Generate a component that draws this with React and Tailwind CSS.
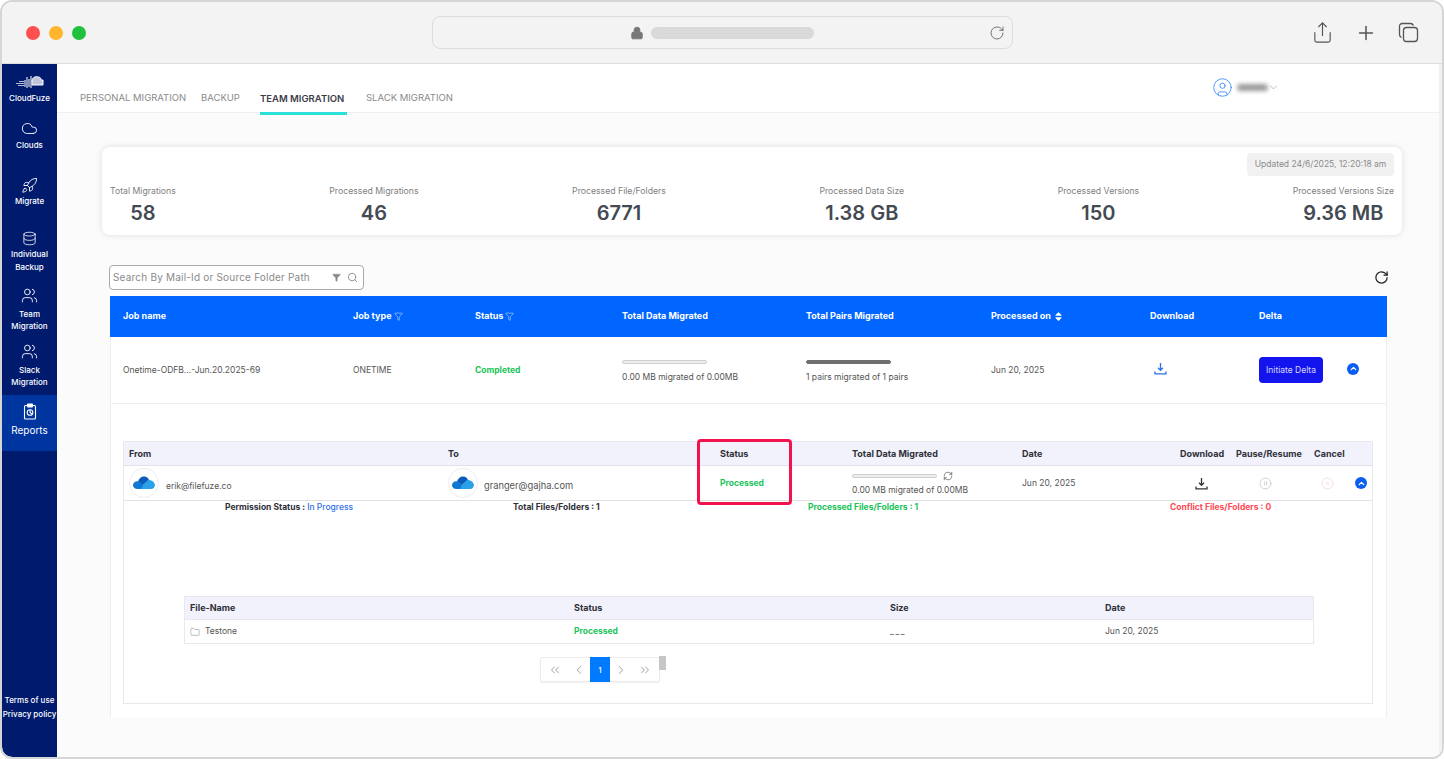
import React from "react"
import { ChevronDown, ChevronLeft, ChevronRight, ChevronUp, ChevronsLeft, ChevronsRight, CirclePause, CircleUser, CircleX, Cloud, Database, Folder, Funnel, Lock, Plus, RefreshCw, Rocket, RotateCw, Search, Share, Users } from "lucide-react"
import { FaSort } from "react-icons/fa"

const stats = [
  ["Total Migrations", "58"],
  ["Processed Migrations", "46"],
  ["Processed File/Folders", "6771"],
  ["Processed Data Size", "1.38 GB"],
  ["Processed Versions", "150"],
  ["Processed Versions Size", "9.36 MB"],
]

function Logo() {
  return (
    <svg width="30" height="18" viewBox="0 0 30 18" fill="none" stroke="white" strokeWidth="1">
      <path d="M1 9.500h8M3 11.500h6M4 7.500h5" strokeOpacity=".7" />
      <path d="M10 6v7M12 3v11M14 5v8M16 2v12" />
      <path d="M17 6c1-3 4-4 6-3 2 0 3 1 3 3h2v5H17z" fill="white" fillOpacity=".75" />
    </svg>
  )
}

function OneDrive() {
  return (
    <div className="w-[30px] h-[30px] rounded-full border border-[#eeeeee] flex items-center justify-center bg-white shrink-0">
      <svg width="22" height="14" viewBox="0 0 22 14">
        <path d="M5 5.500C6 2 9-.2 12 .6c2 .5 3.400 1.700 4 3.400L10 9z" fill="#0a5cb8" />
        <path d="M4.500 13C2 13 0 11.400 0 9.200 0 7 2 5 5 5.300L11 9l-2 4z" fill="#0f78d4" />
        <path d="M8 13l2-4 5-5c3-.4 6 1.600 7 4.500 0 2.500-1.500 4.500-4 4.500z" fill="#2aa0e8" />
      </svg>
    </div>
  )
}

function DownloadIcon({ className }) {
  return (
    <svg className={className} width="13" height="13" viewBox="0 0 13 13" fill="none" stroke="currentColor" strokeWidth="1.300">
      <path d="M6.500 1v7M4 5.800l2.500 2.500L9 5.800" />
      <path d="M1 9.500v2.300h11V9.500" />
    </svg>
  )
}

function ToggleUp() {
  return (
    <span className="w-3 h-3 rounded-full bg-[#0b5ff0] flex items-center justify-center">
      <ChevronUp size={9} strokeWidth={3.5} className="text-white" />
    </span>
  )
}

function SideItem({ icon, lines, className }) {
  return (
    <div className={"flex flex-col items-center text-white text-[8px] font-medium " + className}>
      {icon}
      {lines.map(l => <span key={l}>{l}</span>)}
    </div>
  )
}

function Sidebar() {
  return (
    <aside className="w-[55px] shrink-0 bg-[#001a6e] flex flex-col rounded-bl-[10px]">
      <SideItem className="mt-[10px] leading-[12px]" icon={<Logo />} lines={["CloudFuze"]} />
      <SideItem className="mt-[16px] leading-[12px]" icon={<Cloud size={17} strokeWidth={1.3} className="mb-[2px]" />} lines={["Clouds"]} />
      <SideItem className="mt-[26px] leading-[12px]" icon={<Rocket size={17} strokeWidth={1.3} className="mb-[1px]" />} lines={["Migrate"]} />
      <SideItem className="mt-[24px] leading-[13px]" icon={<Database size={15} strokeWidth={1.3} className="mb-[2px]" />} lines={["Individual", "Backup"]} />
      <SideItem className="mt-[13px] leading-[12px]" icon={<Users size={17} strokeWidth={1.3} className="mb-[4px]" />} lines={["Team", "Migration"]} />
      <SideItem className="mt-[11px] leading-[12px]" icon={<Users size={17} strokeWidth={1.3} className="mb-[4px]" />} lines={["Slack", "Migration"]} />
      <div className="mt-[7px] h-[56px] bg-[#00349f] flex flex-col items-center pt-[8px] text-white text-[10px] leading-[14px]">
        <svg width="14" height="17" viewBox="0 0 14 17" fill="none" stroke="white" strokeWidth="1.100" className="mb-[3px]">
          <rect x="1.500" y="2.500" width="11" height="13.500" rx="1" />
          <rect x="4.500" y="1" width="5" height="3" rx=".5" fill="white" />
          <circle cx="7" cy="9.500" r="2.800" />
          <path d="M7 7v2.500l2 1.500" />
        </svg>
        Reports
      </div>
      <div className="mt-auto mb-[36px] flex flex-col items-center text-white text-[8px] leading-[14px] font-medium">
        <span>Terms of use</span>
        <span>Privacy policy</span>
      </div>
    </aside>
  )
}

function TopNav() {
  return (
    <nav className="h-[49px] shrink-0 bg-white border-b border-[#f0f0f0] flex items-end pl-[23px] pr-[160px] text-[9.5px] text-[#8a8a8a]">
      <span className="mb-[7px] w-[121px]">PERSONAL MIGRATION</span>
      <span className="mb-[7px] w-[59px]">BACKUP</span>
      <span className="w-[106px] h-[27px] -mb-[3px]">
        <span className="block w-[87px] h-full pt-[4px] font-semibold text-[#3d3d4a] border-b-[3px] border-[#2be0d8] whitespace-nowrap">TEAM MIGRATION</span>
      </span>
      <span className="mb-[7px]">SLACK MIGRATION</span>
      <div className="ml-auto self-start mt-[13px] flex items-center text-[#888]">
        <CircleUser size={21} strokeWidth={1} className="text-[#3d8bff]" />
        <span className="ml-[4px] w-[31px] h-[7px] rounded-full bg-[#9a9a9a] blur-[2px]"></span>
        <ChevronDown size={11} strokeWidth={1.2} />
      </div>
    </nav>
  )
}

function StatsCard() {
  return (
    <section className="ml-[45px] mr-[37px] h-[88px] bg-white rounded-lg shadow-[0_0_6px_rgba(0,0,0,0.12)] px-[8px] pt-[6px]">
      <div className="flex justify-end">
        <span className="h-[23px] w-[147px] rounded bg-[#f1f1f1] text-[#8b8b8b] text-[8.5px] flex items-center justify-center">Updated 24/6/2025, 12:20:18 am</span>
      </div>
      <div className="flex justify-between mt-[9px]">
        {stats.map(([label, val]) => (
          <div key={label} className="flex flex-col items-center">
            <span className="text-[8.7px] leading-[12px] text-[#808080] whitespace-nowrap">{label}</span>
            <span className="text-[20px] leading-[33px] font-semibold text-[#444a52]">{val}</span>
          </div>
        ))}
      </div>
    </section>
  )
}

function Progress({ text, dark, extra, gap }) {
  return (
    <div className="flex flex-col">
      <div className="flex items-center">
        <div className={"w-[85px] h-[4px] rounded-full border " + (dark ? "bg-[#6f6f6f] border-[#6f6f6f]" : "bg-[#eeeeee] border-[#cfcfcf]")}></div>
        {extra}
      </div>
      <span className={"text-[8.5px] leading-[12px] text-[#555] whitespace-nowrap " + gap}>{text}</span>
    </div>
  )
}

function JobTable() {
  return (
    <div className="ml-[53px] mr-[52px] flex-1 bg-white border-x border-[#eeeeee] flex flex-col">
      <div className="h-[41px] -mx-[1px] pb-[1px] bg-[#0066ff] grid grid-cols-[230px_122px_147px_184px_185px_159px_109px_1fr] pl-[13px] items-center text-white text-[9px] font-bold">
        <span>Job name</span>
        <span className="flex items-center gap-[2px]">Job type <Funnel size={9} strokeWidth={1.2} /></span>
        <span className="flex items-center gap-[2px]">Status <Funnel size={9} strokeWidth={1.2} /></span>
        <span>Total Data Migrated</span>
        <span>Total Pairs Migrated</span>
        <span className="flex items-center gap-[2px]">Processed on <FaSort size={11} /></span>
        <span>Download</span>
        <span>Delta</span>
      </div>
      <div className="h-[67px] -ml-[1px] border-b border-[#eeeeee] grid grid-cols-[230px_122px_147px_184px_185px_159px_109px_88px_1fr] pl-[13px] items-center text-[8.5px] text-[#555]">
        <span>Onetime-ODFB...-Jun.20.2025-69</span>
        <span>ONETIME</span>
        <span className="font-bold text-[#19c45a]">Completed</span>
        <div className="mt-[2px]"><Progress gap="mt-[7px]" text="0.00 MB migrated of 0.00MB" /></div>
        <div className="mt-[2px]"><Progress dark gap="mt-[7px]" text="1 pairs migrated of 1 pairs" /></div>
        <span>Jun 20, 2025</span>
        <DownloadIcon className="text-[#2f6fe8] ml-[4px] -mt-[3px]" />
        <span className="w-[64px] h-[26px] rounded bg-[#1414ee] text-[#d5d8ff] flex items-center justify-center">Initiate Delta</span>
        <span className="-mt-[3px]"><ToggleUp /></span>
      </div>
      <PairPanel />
    </div>
  )
}

function PairPanel() {
  return (
    <div className="relative ml-[12px] mr-[13px] mt-[37px] h-[263px] border border-[#e8e8ee] flex flex-col">
      <div className="h-[24px] shrink-0 bg-[#f1f2fc] border-b border-[#e1e1ea] grid grid-cols-[319px_272px_132px_170px_158px_56px_78px_1fr] pl-[5px] items-center text-[9px] font-bold text-[#2f3038]">
        <span>From</span>
        <span>To</span>
        <span>Status</span>
        <span>Total Data Migrated</span>
        <span>Date</span>
        <span>Download</span>
        <span>Pause/Resume</span>
        <span>Cancel</span>
      </div>
      <div className="h-[35px] shrink-0 border-b border-[#e1e1e1] grid grid-cols-[319px_272px_132px_170px_158px_56px_78px_41px_1fr] pl-[5px] items-center text-[8.5px] text-[#555]">
        <span className="flex items-center gap-[7px]"><OneDrive /><span className="mt-[6px]">erik@filefuze.co</span></span>
        <span className="flex items-center gap-[6px]"><OneDrive /><span className="mt-[6px] text-[9.3px]">granger@gajha.com</span></span>
        <span className="font-bold text-[#19c45a] mt-[1px]">Processed</span>
        <div className="mt-[1px]"><Progress gap="mt-[3px]" text="0.00 MB migrated of 0.00MB" extra={<RefreshCw size={10} strokeWidth={1.5} className="ml-[6px] text-[#444]" />} /></div>
        <span>Jun 20, 2025</span>
        <DownloadIcon className="text-[#333] ml-[15px]" />
        <CirclePause size={13} strokeWidth={1.3} className="text-[#bdbdbd] ml-[23px]" />
        <CircleX size={13} strokeWidth={1.3} className="text-[#f5cdd2] ml-[7px]" />
        <ToggleUp />
      </div>
      <div className="flex text-[8.5px] font-bold leading-[12px] mt-[-1px] pl-[101px] text-[#2f3038]">
        <span className="w-[288px] pt-[1px]">Permission Status : <span className="font-medium text-[#2f6fe8]">In Progress</span></span>
        <span className="w-[295px] pt-[1px]">Total Files/Folders : 1</span>
        <span className="w-[362px] pt-[1px] text-[#19c45a]">Processed Files/Folders : 1</span>
        <span className="pt-[1px] text-[#ff4a55]">Conflict Files/Folders : 0</span>
      </div>
      <FileTable />
      <div className="absolute left-[573px] top-[-3px] w-[95px] h-[66px] border-[3px] border-[#f0134d] rounded-[4px]"></div>
    </div>
  )
}

function FileTable() {
  return (
    <div className="ml-[60px] mr-[58px] mt-[83px]">
      <div className="border border-[#e8e8ee]">
        <div className="h-[23px] bg-[#f1f2fc] border-b border-[#e8e8ee] grid grid-cols-[384px_316px_215px_1fr] pl-[5px] items-center text-[9px] font-bold text-[#2f3038]">
          <span>File-Name</span>
          <span>Status</span>
          <span>Size</span>
          <span>Date</span>
        </div>
        <div className="h-[23px] grid grid-cols-[384px_316px_215px_1fr] pl-[5px] items-center text-[8.5px] text-[#555]">
          <span className="flex items-center gap-[5px]"><Folder size={10} strokeWidth={1} className="text-[#666]" />Testone</span>
          <span className="font-bold text-[#19c45a]">Processed</span>
          <span className="tracking-[1.5px]">___</span>
          <span>Jun 20, 2025</span>
        </div>
      </div>
      <div className="flex ml-[356px] mt-[13px]">
        <div className="h-[25px] flex items-center border border-[#ececec] rounded-[2px] bg-white text-[#777] shadow-[0_1px_2px_rgba(0,0,0,0.06)]">
          <span className="w-[27px] flex justify-center"><ChevronsLeft size={14} strokeWidth={1.2} /></span>
          <span className="w-[22px] flex justify-center"><ChevronLeft size={14} strokeWidth={1.2} /></span>
          <span className="w-[20px] h-[25px] bg-[#007bff] text-white text-[8px] font-medium flex items-center justify-center">1</span>
          <span className="w-[21px] flex justify-center"><ChevronRight size={14} strokeWidth={1.2} /></span>
          <span className="w-[28px] flex justify-center"><ChevronsRight size={14} strokeWidth={1.2} /></span>
        </div>
        <div className="w-[7px] h-[14px] -mt-[1px] -ml-[1px] bg-[#c6c6c6]"></div>
      </div>
    </div>
  )
}

function Browser() {
  return (
    <header className="h-[62px] shrink-0 bg-[#f3f3f3] border-b border-[#dddddd] rounded-t-[10px] flex items-center text-[#555]">
      <div className="flex gap-[9px] pl-[24px] w-[430px]">
        <span className="w-[14px] h-[14px] rounded-full bg-[#ff5050]"></span>
        <span className="w-[14px] h-[14px] rounded-full bg-[#ffb62e]"></span>
        <span className="w-[14px] h-[14px] rounded-full bg-[#1fc23f]"></span>
      </div>
      <div className="w-[581px] h-[33px] rounded-lg border border-[#dcdcdc] flex items-center pl-[197px] pr-[7px]">
        <Lock size={14} fill="#777" strokeWidth={1.5} className="text-[#777]" />
        <span className="ml-[7px] w-[163px] h-[12px] rounded-full bg-[#d9d9d9]"></span>
        <RotateCw size={16} strokeWidth={1.2} className="ml-auto" />
      </div>
      <div className="ml-auto flex items-center gap-[21px] pr-[23px]">
        <Share size={23} strokeWidth={1.2} />
        <Plus size={22} strokeWidth={1.7} />
        <svg width="21" height="21" viewBox="0 0 21 21" fill="none" stroke="currentColor" strokeWidth="1.3">
          <rect x="5.500" y="5.500" width="14" height="14" rx="3" />
          <path d="M3.500 15.500c-1-.5-2-1.500-2-3v-8c0-2 1-3 3-3h8c1.500 0 2.500 1 3 2" />
        </svg>
      </div>
    </header>
  )
}

export default function App() {
  return (
    <div className="w-[1444px] h-[759px] bg-white overflow-hidden" style={{ fontFamily: "Inter, 'Noto Sans', sans-serif" }}>
      <div className="h-full border-2 border-[#d6d6d6] rounded-xl flex flex-col overflow-hidden">
        <Browser />
        <div className="flex-1 flex min-h-0">
          <Sidebar />
          <main className="flex-1 flex flex-col min-w-0 bg-[#fbfbfb] border-r-[3px] border-[#f1f1f1]">
            <TopNav />
            <div className="flex-1 flex flex-col pt-[34px] pb-[40px] min-h-0">
              <StatsCard />
              <div className="ml-[52px] mr-[50px] mt-[30px] flex items-center justify-between">
                <div className="w-[255px] h-[25px] bg-white border border-[#a9a9a9] rounded flex items-center pl-[3px] pr-[5px] text-[#8a8a8a] text-[10px]">
                  <span className="tracking-[0.2px]">Search By Mail-Id or Source Folder Path</span>
                  <Funnel size={9} fill="#888" strokeWidth={1} className="ml-auto" />
                  <Search size={11} strokeWidth={2} className="ml-[6px]" />
                </div>
                <RotateCw size={15} strokeWidth={2} className="text-[#222]" />
              </div>
              <div className="h-[6px]"></div>
              <JobTable />
            </div>
          </main>
        </div>
      </div>
    </div>
  )
}
